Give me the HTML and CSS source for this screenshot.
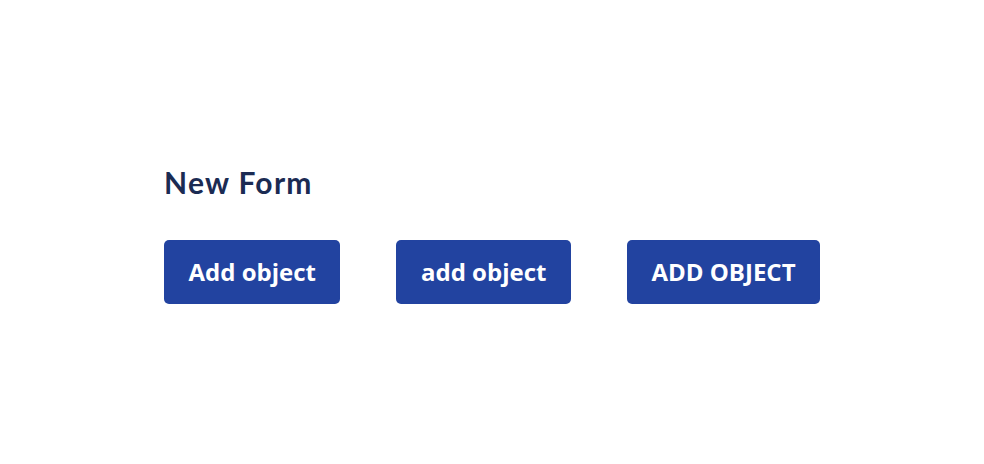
FILE: index.html
```html
<!DOCTYPE html>
<html>
<head>
<meta charset="utf-8">
<link rel="stylesheet" href="styles.css">
</head>
<body>
<main class="page">
  <h1 class="title">New Form</h1>
  <div class="buttons">
    <button class="btn">Add object</button>
    <button class="btn">add object</button>
    <button class="btn">ADD OBJECT</button>
  </div>
</main>
</body>
</html>
```
FILE: styles.css
```css
html, body {
  margin: 0;
  padding: 0;
  background: #ffffff;
}
.page {
  padding: 162px 0 0 164px;
}
.title {
  margin: 0;
  font-family: Lato, "Noto Sans", sans-serif;
  font-weight: 700;
  font-size: 30px;
  letter-spacing: 1.3px;
  line-height: 40px;
  color: #1b2b53;
}
.buttons {
  display: flex;
  gap: 56px;
  margin-top: 38px;
}
.btn {
  font-family: "Open Sans", "Noto Sans", sans-serif;
  font-weight: 700;
  font-size: 24px;
  line-height: 32px;
  color: #ffffff;
  background: #2243a0;
  border: none;
  border-radius: 5px;
  padding: 0 24.5px;
  height: 64px;
}
```
